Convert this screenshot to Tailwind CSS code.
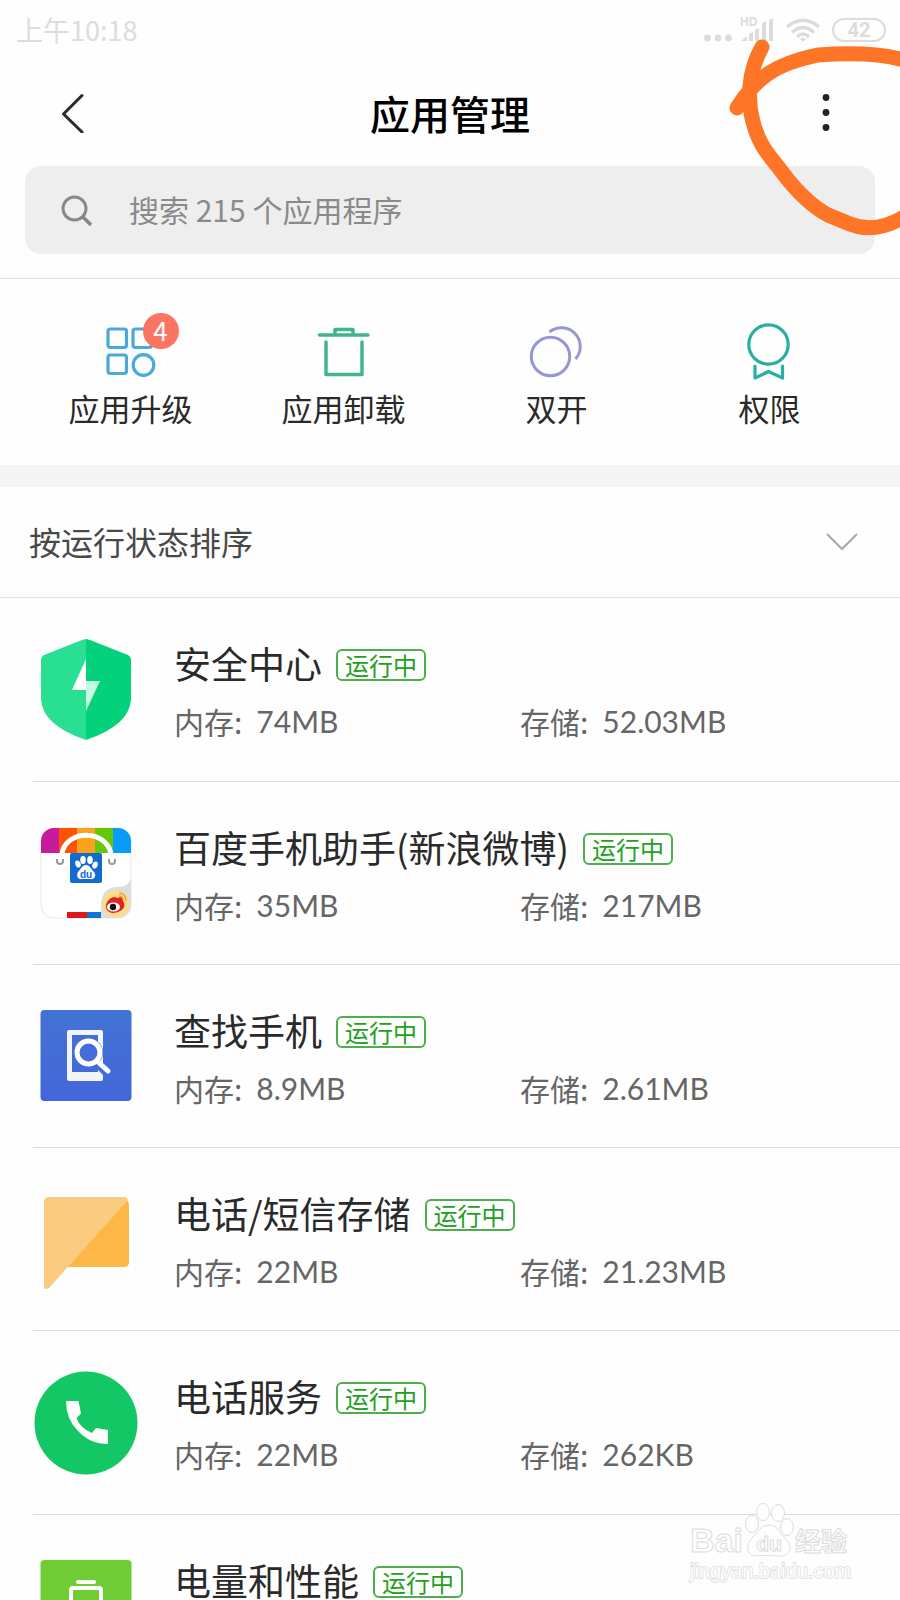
<!DOCTYPE html>
<html lang="zh-CN">
<head>
  <meta charset="utf-8" />
  <meta name="viewport" content="width=device-width, initial-scale=1" />
  <title>应用管理</title>
  <script src="https://cdn.jsdelivr.net/npm/@tailwindcss/browser@4"></script>
</head>
<body class="relative h-screen overflow-hidden bg-[#fefefe] font-['Noto_Sans_CJK_SC',sans-serif] font-normal text-[#2a2a2a]">

  <!-- Status bar -->
  <div class="flex h-[60px] items-center justify-between pl-4 pr-3.5 text-[#dcdcdc]">
    <span class="text-[27px] leading-10">上午10:18</span>
    <div class="flex items-center">
      <svg class="mr-2 h-6 w-7" viewBox="0 0 28 24" fill="currentColor" aria-hidden="true">
        <circle cx="3.5" cy="20" r="3.4" /><circle cx="14" cy="20" r="3.4" /><circle cx="24.5" cy="20" r="3.4" />
      </svg>
      <svg class="mr-3 h-6 w-[34px] overflow-visible" viewBox="0 0 34 24" fill="currentColor" aria-hidden="true">
        <text x="0" y="8" font-family="Liberation Sans, sans-serif" font-size="12" font-weight="700">HD</text>
        <path d="M1 23 7 18v5zM9 16l4-2v9H9zM15 12l4-2v13h-4zM22 5l4-2v20h-4zM29 2l4-2v23h-4z" />
      </svg>
      <svg class="mr-3 h-6 w-[34px]" viewBox="0 0 34 24" fill="none" stroke="currentColor" stroke-width="3.2" aria-hidden="true">
        <path d="M1 9Q17-4.500 33 9M6 14.500Q17 4.500 28 14.500M11 19Q17 13 23 19" />
        <path d="M14 21q3-2.500 6 0l-3 3z" fill="currentColor" stroke="none" />
      </svg>
      <span class="flex h-6 w-[54px] items-center justify-center rounded-full border-2 border-current font-['Roboto',sans-serif] text-xl leading-5 font-bold">42</span>
    </div>
  </div>

  <!-- Title bar -->
  <header class="flex h-[106px] items-center justify-between px-14">
    <button type="button" aria-label="返回" class="flex h-12 w-9 items-center justify-center">
      <svg class="h-10 w-6" viewBox="0 0 24 40" fill="none" stroke="#2a2a2a" stroke-width="3" stroke-linecap="round" stroke-linejoin="round">
        <path d="M20 2.500 1.500 21 20 39" />
      </svg>
    </button>
    <h1 class="text-[40px] leading-[60px] font-medium text-black">应用管理</h1>
    <button type="button" aria-label="更多" class="flex h-12 w-9 items-center justify-center">
      <svg class="h-10 w-2" viewBox="0 0 8 40" fill="#222">
        <circle cx="4" cy="4.500" r="3.400" /><circle cx="4" cy="19.500" r="3.400" /><circle cx="4" cy="34.500" r="3.400" />
      </svg>
    </button>
  </header>

  <label class="mx-[25px] flex h-[88px] items-center rounded-2xl bg-[#eee] pl-9">
    <svg class="mr-9 h-8 w-8 shrink-0" viewBox="0 0 32 32" fill="none" stroke="#888" stroke-width="3" aria-hidden="true">
      <circle cx="13.500" cy="14.500" r="11.500" /><path d="M21.500 22.500 30 31" stroke-width="3.500" />
    </svg>
    <input type="text" aria-label="搜索应用程序" placeholder="搜索 215 个应用程序"
           class="h-full min-w-0 flex-1 bg-transparent pb-0.5 text-[30px] outline-none placeholder:text-[#8a8a8a]" />
  </label>

  <!-- Shortcuts -->
  <nav class="mt-6 grid h-[187px] grid-cols-4 border-t border-[#e2e2e2] px-6 pt-11 text-center text-[31px] leading-[42px]">
    <a href="#upgrade" class="flex flex-col items-center gap-1">
      <span class="relative h-[60px]">
        <svg class="h-[60px] w-[60px]" viewBox="0 0 60 60" fill="none" stroke="#49a9dc" stroke-width="3.200">
          <rect x="7" y="6" width="18.500" height="18.500" rx="2.500" /><rect x="32" y="6" width="18.500" height="18.500" rx="2.500" />
          <rect x="7" y="32" width="18.500" height="18.500" rx="2.500" /><circle cx="42.500" cy="42" r="10.300" />
        </svg>
        <span class="absolute -top-2.5 left-[42px] h-9 w-9 rounded-full bg-[#fb7562] text-[26px] leading-[34px] text-white">4</span>
      </span>
      应用升级
    </a>
    <a href="#uninstall" class="flex flex-col items-center gap-1">
      <svg class="h-[60px] w-[60px]" viewBox="0 0 60 60" fill="none" stroke="#41b48a" stroke-width="3.400" stroke-linecap="round" stroke-linejoin="round">
        <path d="M5.500 12h48.500M21 11V6.500h18V11M12 19v32.500h36V19" />
      </svg>
      应用卸载
    </a>
    <a href="#dual" class="flex flex-col items-center gap-1">
      <svg class="h-[60px] w-[60px]" viewBox="0 0 60 60" fill="none" stroke="#9696d6" stroke-width="3">
        <circle cx="23.500" cy="33.500" r="19.200" /><path d="M22.500 9A18.800 18.800 0 0 1 48.500 36" />
      </svg>
      双开
    </a>
    <a href="#permission" class="flex flex-col items-center gap-1">
      <svg class="h-[60px] w-[60px]" viewBox="0 0 60 60" fill="none" stroke="#29aea3" stroke-width="3.200" stroke-linejoin="round" stroke-linecap="round">
        <circle cx="28.500" cy="21.500" r="19.700" /><path d="M15 43v12L28.500 48.500l14 6.500V43" />
      </svg>
      权限
    </a>
  </nav>

  <!-- Sort order -->
  <div class="relative flex h-[133px] items-center border-t-[22px] border-b border-t-[#f4f4f4] border-b-[#e2e2e2]">
    <select aria-label="排序方式" class="h-full w-full appearance-none bg-transparent pb-0.5 pl-[29px] text-[32px] text-[#484848] outline-none">
      <option>按运行状态排序</option>
      <option>按应用名称排序</option>
      <option>按占用空间排序</option>
    </select>
    <svg class="pointer-events-none absolute right-[42px] h-5 w-8" viewBox="0 0 32 20" fill="none" stroke="#a8a8a8" stroke-width="2" aria-hidden="true">
      <path d="M1 2l15 15L31 2" />
    </svg>
  </div>

  <!-- App list -->
  <ul class="ml-[33px] divide-y divide-[#dcdcdc]">
    <li class="flex h-[184px]">
      <svg class="mr-[35px] h-[104px] w-[106px] shrink-0 self-center" viewBox="0 0 106 104" aria-hidden="true">
        <path d="M53 1 49 2 11 17Q8 18.500 8 22V61Q9 87 53 102z" fill="#28df92" />
        <path d="M53 1 57 2 95 17Q98 18.500 98 22V61Q97 87 53 102z" fill="#04d17b" />
        <path d="M53 21 39 52h14z" fill="#fff" /><path d="M53 43h14L53 73z" fill="#c6fbe3" />
      </svg>
      <div class="flex-1 pt-[45px]">
        <div class="flex items-center gap-3.5">
          <h2 class="text-[37px] leading-10">安全中心</h2>
          <span class="mt-1 h-8 rounded-md border-2 border-[#4eae4b] px-[7px] text-2xl leading-7 text-[#24a01f]">运行中</span>
        </div>
        <div class="mt-[18px] grid grid-cols-2 pr-[34px] text-[30px] leading-10 text-[#666]">
          <p class="flex gap-3.5"><span>内存:</span><span class="font-['Lato',sans-serif]">74MB</span></p>
          <p class="flex gap-3.5"><span>存储:</span><span class="font-['Lato',sans-serif]">52.03MB</span></p>
        </div>
      </div>
    </li>

    <li class="flex h-[183px]">
      <svg class="mr-[35px] h-[104px] w-[106px] shrink-0 self-center" viewBox="0 0 106 104" aria-hidden="true">
        <defs><clipPath id="bag"><rect x="8" y="7" width="90" height="90" rx="13" /></clipPath></defs>
        <rect x="8" y="7" width="90" height="90" rx="13" fill="#fff" stroke="#e8e8e8" />
        <g clip-path="url(#bag)">
          <path d="M8 7h18v25H8z" fill="#c71b9b" /><path d="M26 7h18v25H26z" fill="#fb5203" /><path d="M44 7h18v25H44z" fill="#faa21b" />
          <path d="M62 7h18v25H62z" fill="#66c706" /><path d="M80 7h18v25H80z" fill="#079cf8" />
          <path d="M34 91h20v6H34z" fill="#df1719" /><path d="M54 91h14v6H54z" fill="#0c76d5" />
          <path d="M68 98V82Q70 65 86 66 94 66 98 58V98z" fill="#dededc" />
        </g>
        <path d="M29 33C32 8 74 8 78 33" fill="none" stroke="#fff" stroke-width="5" />
        <path d="M24 38v2a3 3 0 0 0 6 0v-2M76 38v2a3 3 0 0 0 6 0v-2" fill="none" stroke="#999" stroke-width="2" />
        <rect x="37" y="32" width="32" height="30" rx="2" fill="#126bcd" />
        <g fill="#fff">
          <ellipse cx="45" cy="43" rx="2.600" ry="3.600" transform="rotate(-20 45 43)" /><ellipse cx="50" cy="39" rx="2.800" ry="4" /><ellipse cx="57" cy="39" rx="2.800" ry="4" /><ellipse cx="62" cy="44" rx="2.600" ry="3.600" transform="rotate(20 62 44)" />
          <path d="M53 44c4 0 5 4 8 7 3 4 0 8-4 7h-8c-4 1-6-3-4-7 3-3 4-7 8-7" />
        </g>
        <text x="53" y="57" text-anchor="middle" font-family="Liberation Sans, sans-serif" font-size="10" font-weight="700" fill="#126bcd">du</text>
        <circle cx="83" cy="83" r="13.500" fill="#fbdd8d" />
        <path d="M73 85c0-6 8-11 11-8 5-2 7 0 6 3 5 8-5 12-10 12-4 0-7-3-7-7" fill="#e52421" />
        <ellipse cx="80.500" cy="86" rx="6.500" ry="4.500" fill="#fff" /><circle cx="80" cy="86" r="3.200" fill="#111" />
        <path d="M86 72q7 0 7 8M86 75q4 0 4 4" fill="none" stroke="#f3a33b" stroke-width="1.500" />
      </svg>
      <div class="flex-1 pt-[45px]">
        <div class="flex items-center gap-3.5">
          <h2 class="text-[37px] leading-10">百度手机助手(新浪微博)</h2>
          <span class="mt-1 h-8 rounded-md border-2 border-[#4eae4b] px-[7px] text-2xl leading-7 text-[#24a01f]">运行中</span>
        </div>
        <div class="mt-[18px] grid grid-cols-2 pr-[34px] text-[30px] leading-10 text-[#666]">
          <p class="flex gap-3.5"><span>内存:</span><span class="font-['Lato',sans-serif]">35MB</span></p>
          <p class="flex gap-3.5"><span>存储:</span><span class="font-['Lato',sans-serif]">217MB</span></p>
        </div>
      </div>
    </li>

    <li class="flex h-[183px]">
      <svg class="mr-[35px] h-[104px] w-[106px] shrink-0 self-center" viewBox="0 0 106 104" aria-hidden="true">
        <defs><linearGradient id="find" x2="0" y2="1"><stop stop-color="#4273d5" /><stop offset="1" stop-color="#4466d9" /></linearGradient></defs>
        <rect x="7.500" y="6" width="91" height="91" rx="4" fill="url(#find)" />
        <path d="M34 28Q34 26 36 26H68Q70 26 70 28V75Q70 77 68 77H36Q34 77 34 75zM39 31V68H65V31z" fill="#f2f5fd" fill-rule="evenodd" />
        <path d="M61 62l9 9V60z" fill="#446dd8" />
        <circle cx="55.500" cy="48.500" r="14.500" fill="#446dd8" />
        <circle cx="55.500" cy="48.500" r="11.500" stroke="#fff" stroke-width="5" fill="none" />
        <path d="M64 57l11 10" stroke="#fff" stroke-width="5" stroke-linecap="round" />
      </svg>
      <div class="flex-1 pt-[45px]">
        <div class="flex items-center gap-3.5">
          <h2 class="text-[37px] leading-10">查找手机</h2>
          <span class="mt-1 h-8 rounded-md border-2 border-[#4eae4b] px-[7px] text-2xl leading-7 text-[#24a01f]">运行中</span>
        </div>
        <div class="mt-[18px] grid grid-cols-2 pr-[34px] text-[30px] leading-10 text-[#666]">
          <p class="flex gap-3.5"><span>内存:</span><span class="font-['Lato',sans-serif]">8.9MB</span></p>
          <p class="flex gap-3.5"><span>存储:</span><span class="font-['Lato',sans-serif]">2.61MB</span></p>
        </div>
      </div>
    </li>

    <li class="flex h-[183px]">
      <svg class="mr-[35px] h-[104px] w-[106px] shrink-0 self-center" viewBox="0 0 106 104" aria-hidden="true">
        <path d="M94 13Q96 15 96 18V75Q96 80 91 80H33z" fill="#fdb747" />
        <path d="M16 10H91Q94 10 95 13L16 101Q11 104 11 99V15Q11 10 16 10" fill="#fbcc80" />
      </svg>
      <div class="flex-1 pt-[45px]">
        <div class="flex items-center gap-3.5">
          <h2 class="text-[37px] leading-10">电话/短信存储</h2>
          <span class="mt-1 h-8 rounded-md border-2 border-[#4eae4b] px-[7px] text-2xl leading-7 text-[#24a01f]">运行中</span>
        </div>
        <div class="mt-[18px] grid grid-cols-2 pr-[34px] text-[30px] leading-10 text-[#666]">
          <p class="flex gap-3.5"><span>内存:</span><span class="font-['Lato',sans-serif]">22MB</span></p>
          <p class="flex gap-3.5"><span>存储:</span><span class="font-['Lato',sans-serif]">21.23MB</span></p>
        </div>
      </div>
    </li>

    <li class="flex h-[184px]">
      <svg class="mr-[35px] h-[104px] w-[106px] shrink-0 self-center" viewBox="0 0 106 104" aria-hidden="true">
        <circle cx="53" cy="52" r="51.500" fill="#13c764" />
        <path d="M33 30H45.500L48 42.500 43.500 47Q47 57 59 62L63 57 75 59V73Q57 73 45 60 33 48 33 30z" fill="#fff" />
      </svg>
      <div class="flex-1 pt-[45px]">
        <div class="flex items-center gap-3.5">
          <h2 class="text-[37px] leading-10">电话服务</h2>
          <span class="mt-1 h-8 rounded-md border-2 border-[#4eae4b] px-[7px] text-2xl leading-7 text-[#24a01f]">运行中</span>
        </div>
        <div class="mt-[18px] grid grid-cols-2 pr-[34px] text-[30px] leading-10 text-[#666]">
          <p class="flex gap-3.5"><span>内存:</span><span class="font-['Lato',sans-serif]">22MB</span></p>
          <p class="flex gap-3.5"><span>存储:</span><span class="font-['Lato',sans-serif]">262KB</span></p>
        </div>
      </div>
    </li>

    <li class="flex h-[183px]">
      <svg class="mr-[35px] h-[104px] w-[106px] shrink-0 self-center" viewBox="0 0 106 104" aria-hidden="true">
        <rect x="7.500" y="5" width="91" height="91" rx="4" fill="#6fcc35" />
        <path d="M45 27h16" stroke="#fff" stroke-width="4" stroke-linecap="round" />
        <rect x="38" y="33" width="30" height="44" rx="2" fill="none" stroke="#fff" stroke-width="4" />
      </svg>
      <div class="flex-1 pt-[45px]">
        <div class="flex items-center gap-3.5">
          <h2 class="text-[37px] leading-10">电量和性能</h2>
          <span class="mt-1 h-8 rounded-md border-2 border-[#4eae4b] px-[7px] text-2xl leading-7 text-[#24a01f]">运行中</span>
        </div>
      </div>
    </li>
  </ul>

  <!-- Hand-drawn mark round the menu button -->
  <svg class="pointer-events-none absolute top-0 right-0 h-[270px] w-[300px]" viewBox="0 0 300 270" fill="none" stroke="#ff7527" stroke-width="15" stroke-linecap="round" stroke-linejoin="round" aria-hidden="true">
    <path d="M162 47C148 72 147 100 153 122 160 148 170 156 182 172 197 192 213 207 228 215L250 224Q275 234 304 217" />
    <path d="M137 108C155 79 174 64 218 55Q272 51 304 60" />
  </svg>

  <!-- Watermark -->
  <svg class="pointer-events-none absolute right-[44px] bottom-[12px] h-[88px] w-[168px]" viewBox="0 0 168 88" fill="#fefefe" stroke="#dcdcdc" stroke-width="1" aria-hidden="true">
    <g font-family="Liberation Sans, sans-serif" font-weight="700">
      <text x="2" y="52" font-size="34">Bai</text>
      <ellipse cx="64" cy="24" rx="6.500" ry="8.500" /><ellipse cx="75" cy="12" rx="6.500" ry="8.500" /><ellipse cx="90" cy="13" rx="6.500" ry="8.500" /><ellipse cx="99" cy="27" rx="6.500" ry="8.500" />
      <path d="M81 25c9 0 10 8 16 13 9 8 5 18-4 18-8 0-18-1-25 0-9 0-11-11-4-18 7-6 8-13 17-13z" />
      <text x="81" y="51" font-size="21" text-anchor="middle">du</text>
      <text x="107" y="51" font-size="26" font-family="Noto Sans CJK SC, sans-serif">经验</text>
      <text x="2" y="78" font-size="20" font-weight="400" stroke-width="1.500" paint-order="stroke">jingyan.baidu.com</text>
    </g>
  </svg>

</body>
</html>
